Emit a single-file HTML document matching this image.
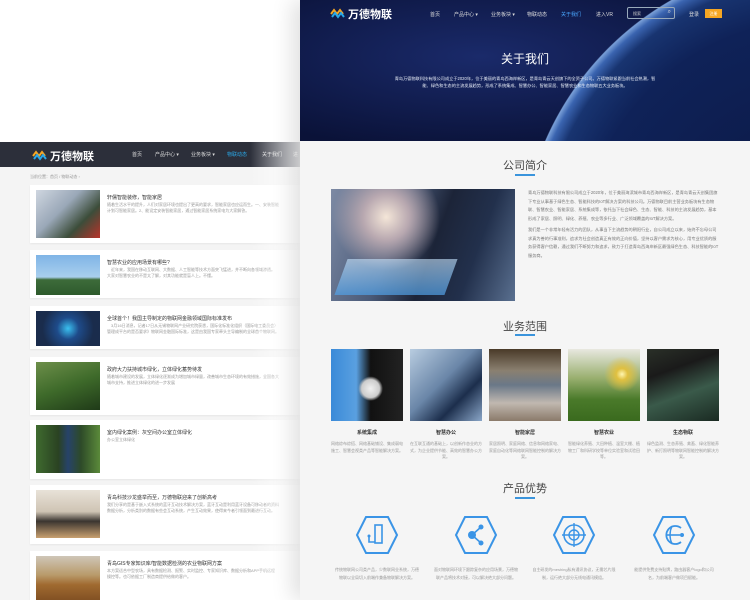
<!DOCTYPE html>
<html><head><meta charset="utf-8"><style>
*{margin:0;padding:0;box-sizing:border-box}
body{width:750px;height:600px;overflow:hidden;background:#fff;font-family:"Liberation Sans","Noto Sans CJK SC",sans-serif;position:relative}
.abs{position:absolute}
#left{left:0;top:142px;width:300px;height:458px;background:#f4f4f4;overflow:hidden}
#lnav{left:0;top:0;width:300px;height:25px;background:#2c2f3a}
.logo{display:flex;align-items:center;gap:2px}
.logo b{font-size:11px;color:#fff;font-weight:bold;letter-spacing:0}
.navi{font-size:5px;color:#ddd;top:9px}
.card{left:30px;width:280px;background:#fff;box-shadow:0 1px 2px rgba(0,0,0,.06)}
.card .img{position:absolute;left:6px;top:5px;width:64px;height:48px}
.card .t{position:absolute;left:77px;top:9px;font-size:5px;color:#333;white-space:nowrap}
.card .d{position:absolute;left:77px;top:17px;font-size:4px;color:#999;line-height:6px;width:200px;white-space:nowrap;overflow:hidden}
#fade{left:250px;top:142px;width:50px;height:458px;background:linear-gradient(90deg,rgba(255,255,255,0),rgba(255,255,255,.85))}
#right{left:300px;top:0;width:450px;height:600px;background:#f5f5f5;box-shadow:-8px 0 20px rgba(0,0,0,.12)}
#hero{left:0;top:0;width:450px;height:141px;overflow:hidden;background:radial-gradient(ellipse at 40% 40%,#1a2a6a,#0a1238 80%)}
#planet{left:220px;top:-40px;width:600px;height:600px;border-radius:50%;background:radial-gradient(circle 300px at 300px 300px,#0a1640 0,#0f2258 240px,#183470 280px,#3a64b0 293px,#7aa0d8 299px,rgba(90,134,200,0) 300px)}
.h2{position:absolute;left:0;width:450px;text-align:center;font-size:11px;color:#444}
.ul{position:absolute;left:215px;width:20px;height:2px;background:#3a94dc}
.p{font-size:4.2px;color:#777;line-height:8.5px}
.tile{position:absolute;top:349px;width:72px;height:72px}
.tt{position:absolute;top:429px;width:72px;text-align:center;font-size:5px;color:#333;font-weight:bold}
.td{position:absolute;top:441px;width:72px;text-align:center;font-size:4px;color:#999;line-height:6.5px}
.hx{position:absolute;top:515px;width:44px;height:40px}
.hd{position:absolute;top:566px;width:86px;text-align:center;font-size:4px;color:#999;line-height:7.5px}
</style></head><body>

<div id="left" class="abs">
 <div id="lnav" class="abs">
  <div class="abs logo" style="left:32px;top:6px">
   <svg width="16" height="12" viewBox="0 0 16 12"><path d="M1 6 L4 2 L7 6 L10 2 L13 6" stroke="#f5a623" stroke-width="2" fill="none"/><path d="M2 9 L5 5 L8 9 L11 5 L14 9" stroke="#2aa8e8" stroke-width="2" fill="none"/></svg>
   <b>万德物联</b>
  </div>
  <span class="abs navi" style="left:132px">首页</span>
  <span class="abs navi" style="left:155px">产品中心 ▾</span>
  <span class="abs navi" style="left:191px">业务板块 ▾</span>
  <span class="abs navi" style="left:227px;color:#2aa8e8">物联动态</span>
  <span class="abs navi" style="left:262px">关于我们</span>
  <span class="abs navi" style="left:293px">进</span>
 </div>
 <div class="abs" style="left:30px;top:32px;font-size:4px;color:#999">当前位置：首页 / 物联动态 ›</div>
 <div class="abs card" style="top:43px;height:58px"><div class="img" style="background:linear-gradient(135deg,#cfd6e0,#9aa8b8 40%,#3c4d3a 70%,#b8332a)"></div><div class="t">轩儒智能装修，智能家居</div><div class="d">随着生活水平的提升，人们对家居环境也提出了更高的要求，智能家居也应运而生。一、安装智能<br>计划可智能家居。2、能设定安装智能家居，通过智能家居系统家电为大家解答。</div></div>
 <div class="abs card" style="top:108px;height:48px"><div class="img" style="height:40px;background:linear-gradient(180deg,#7fb4e6,#a9cfee 55%,#3d6b3a 62%,#2e5a2c)"></div><div class="t">智慧农业的应用场景有哪些?</div><div class="d">　近年来，我国在移动互联网、大数据、人工智能等技术方面突飞猛进，并不断向各领域渗透。<br>大家对智慧农业的不是太了解，对其功能就是盲人上。不懂。</div></div>
 <div class="abs card" style="top:164px;height:43px"><div class="img" style="height:35px;background:radial-gradient(circle at 50% 50%,#3ac0f0 0,#1e4b8a 30%,#1a2c4c 70%)"></div><div class="t">全球首个！我国主导制定的物联网金融领域国际标准发布</div><div class="d">　3月16日消息，记者17日从无锡物联网产业研究院获悉，国际化标准化组织（国际电工委员会）<br>管理成平台的是否要求》物联网金融国际标准，这是由我国专家牵头主导编制的全球首个物联网。</div></div>
 <div class="abs card" style="top:215px;height:58px"><div class="img" style="background:linear-gradient(160deg,#6d8f4a,#3e6a2a 50%,#1f3a18)"></div><div class="t">政府大力扶持城市绿化，立体绿化蓄势待发</div><div class="d">随着城市建设的发展，立体绿化逐渐成为增加城市绿量，改善城市生态环境的有效措施，全国各大<br>城市支持，推进立体绿化的进一步发展</div></div>
 <div class="abs card" style="top:278px;height:59px"><div class="img" style="background:linear-gradient(90deg,#3f6b2f,#2a4222 35%,#27436a 50%,#2d4a28 70%,#5b8a3a)"></div><div class="t">室内绿化案例：灰空间办公室立体绿化</div><div class="d">办公室立体绿化</div></div>
 <div class="abs card" style="top:343px;height:59px"><div class="img" style="background:linear-gradient(180deg,#e8e2d8,#cfc4b4 45%,#3a3530 65%,#c8a070)"></div><div class="t">青岛科技沙龙盛举而至，万德物联迎来了创新高考</div><div class="d">我们分享的是基于嵌入式系统的蓝牙互动技术解决方案，蓝牙互动是利用蓝牙设备可移动者的资料<br>数据分析，分析类别的数据有些会互动系统，产生互动效果，使得来今者引领面到最进行互动。</div></div>
 <div class="abs card" style="top:409px;height:55px"><div class="img" style="background:linear-gradient(180deg,#cfc6b8,#b89a6a 40%,#a06a30 60%,#7a4a20)"></div><div class="t">青岛GIS专家知识库/智能数据检测的农业物联网方案</div><div class="d">本方案适合中型农场，具有数据检测、报警、实时监控、专家知识库、数据分析和APP手机远程<br>操控等。也可依据工厂制造商提供给做的客户。</div></div>
</div>
<div id="fade" class="abs"></div>

<div id="right" class="abs">
 <div id="hero" class="abs">
  <div id="planet" class="abs"></div>
  <div class="abs logo" style="left:30px;top:6px">
   <svg width="16" height="12" viewBox="0 0 16 12"><path d="M1 6 L4 2 L7 6 L10 2 L13 6" stroke="#f5a623" stroke-width="2" fill="none"/><path d="M2 9 L5 5 L8 9 L11 5 L14 9" stroke="#2aa8e8" stroke-width="2" fill="none"/></svg>
   <b>万德物联</b>
  </div>
  <span class="abs navi" style="left:130px;top:11px">首页</span>
  <span class="abs navi" style="left:154px;top:11px">产品中心 ▾</span>
  <span class="abs navi" style="left:191px;top:11px">业务板块 ▾</span>
  <span class="abs navi" style="left:227px;top:11px">物联动态</span>
  <span class="abs navi" style="left:261px;top:11px;color:#4aa8ff">关于我们</span>
  <span class="abs navi" style="left:296px;top:11px">进入VR</span>
  <div class="abs" style="left:327px;top:7px;width:48px;height:12px;border:1px solid #9ab;border-radius:2px"><span class="abs" style="left:5px;top:3px;font-size:4px;color:#ccc">搜索</span><span class="abs" style="right:3px;top:1px;font-size:6px;color:#ddd">⌕</span></div>
  <span class="abs navi" style="left:389px;top:11px">登录</span>
  <div class="abs" style="left:405px;top:9px;width:17px;height:9px;background:#f5a623;font-size:4px;color:#fff;text-align:center;line-height:9px">注册</div>
  <div class="abs" style="left:0;top:50px;width:450px;text-align:center;font-size:12px;color:#fff">关于我们</div>
  <div class="abs" style="left:92px;top:75px;width:266px;text-align:center;font-size:4.2px;color:#e8eef8;line-height:7px">青岛万德物联科技有限公司成立于2020年，位于美丽的青岛西海岸新区，是青岛青云天创旗下的全资子公司。万德物联紧跟当前社会热潮，智能、绿色和生态的主流发展趋势，形成了系统集成、智慧办公、智能家居、智慧农业和生态物联五大业务板块。</div>
 </div>

 <div class="h2" style="top:157px">公司简介</div><div class="ul" style="top:174px"></div>
 <div class="abs" style="left:31px;top:189px;width:184px;height:112px;background:radial-gradient(circle at 30% 25%,#f4e6d8 0,#b8a8b0 15%,transparent 35%),linear-gradient(110deg,#7d8aa4 0%,#4a5a78 35%,#1c2438 55%,#22304c 75%,#5a7090 100%)"><div class="abs" style="left:10px;top:70px;width:110px;height:36px;background:linear-gradient(180deg,rgba(200,230,255,.6),rgba(80,160,230,.7));transform:skewX(-20deg)"></div></div>
 <div class="abs p" style="left:228px;top:189px;width:192px">青岛万德物联科技有限公司成立于2020年，位于美丽海滨城市青岛西海岸新区，是青岛青云天创集团旗下专业从事基于绿色生态、智能科技的IoT解决方案的科技公司。万德物联目前主营业务板块有生态物联、智慧农业、智能家居、系统集成等，依托当下社会绿色、生态、智能、科技的主流发展趋势，基本形成了家居、照明、绿化、养殖、农业等多行业、广泛领域覆盖的IoT解决方案。<div style="height:3px"></div>我们是一个非常年轻有活力的团队，从事当下主流趋势的朝阳行业，自公司成立以来，始终不忘母公司求真为善的行事准则，追求为社会创造真正有效的正向价值，坚持以客户需求为核心，用专业优质的服务获得客户信赖，通过我们不断努力和追求，致力于打造青岛西海岸新区最强绿色生态、科技智能的IoT服务商。</div>

 <div class="h2" style="top:318px">业务范围</div><div class="ul" style="top:334px"></div>
 <div class="tile" style="left:31px;background:radial-gradient(circle at 55% 55%,#f0f0f0 0,#ccc 16%,transparent 22%),linear-gradient(90deg,#3a8ad8 0,#5aa0e0 35%,#111 55%,#222 100%)"></div>
 <div class="tile" style="left:110px;background:linear-gradient(135deg,#b8cce0,#6a86a8 45%,#1c2e4c 70%,#8aa6c8)"></div>
 <div class="tile" style="left:189px;background:linear-gradient(180deg,#4a3a28,#8a8070 30%,#6a7888 50%,#c0b8b0 75%,#8a7a6a)"></div>
 <div class="tile" style="left:268px;background:radial-gradient(circle at 75% 35%,#fff6b0 0,#e0c040 8%,transparent 25%),linear-gradient(180deg,#e8e8e0,#9ab070 40%,#4a7a2a 70%,#3a6a1e)"></div>
 <div class="tile" style="left:347px;background:linear-gradient(160deg,#2a3028,#1a1a1a 30%,#3a5a4a 60%,#1a2a22)"></div>
 <div class="tt" style="left:31px">系统集成</div><div class="td" style="left:31px">网络综布综搭、网络基础铺设、集成弱电施工、智慧会视类产品等智能解决方案。</div>
 <div class="tt" style="left:110px">智慧办公</div><div class="td" style="left:110px">在互联互通的基础上，以创新作态业的方式，为企业提供节能、高效的智慧办公方案。</div>
 <div class="tt" style="left:189px">智能家居</div><div class="td" style="left:189px">家居照明、家庭网络、信息和网络家电、家庭自动化等网络联网智能控制的解决方案。</div>
 <div class="tt" style="left:268px">智慧农业</div><div class="td" style="left:268px">智能绿化养殖、大田种植、温室大棚、植物工厂和科研学校等单位实验室和试验田等。</div>
 <div class="tt" style="left:347px">生态物联</div><div class="td" style="left:347px">绿色监测、生态养殖、禽畜、绿化智能养护、新打照明等物联网智能控制的解决方案。</div>

 <div class="h2" style="top:480px">产品优势</div><div class="ul" style="top:497px"></div>
 <svg class="hx" style="left:55px" viewBox="0 0 44 40"><polygon points="11,2 33,2 42,20 33,38 11,38 2,20" fill="none" stroke="#3a94e6" stroke-width="2"/><rect x="20" y="10" width="7" height="18" fill="none" stroke="#3a94e6" stroke-width="1.6"/><path d="M14 22 v5 h6" fill="none" stroke="#3a94e6" stroke-width="1.6"/><circle cx="14" cy="21" r="1.5" fill="#3a94e6"/></svg>
 <svg class="hx" style="left:154px" viewBox="0 0 44 40"><polygon points="11,2 33,2 42,20 33,38 11,38 2,20" fill="none" stroke="#3a94e6" stroke-width="2"/><circle cx="18" cy="20" r="4" fill="#3a94e6"/><circle cx="27" cy="12" r="2.5" fill="#3a94e6"/><circle cx="27" cy="28" r="2.5" fill="#3a94e6"/><path d="M18 20 L27 12 M18 20 L27 28" stroke="#3a94e6" stroke-width="1.6"/></svg>
 <svg class="hx" style="left:252px" viewBox="0 0 44 40"><polygon points="11,2 33,2 42,20 33,38 11,38 2,20" fill="none" stroke="#3a94e6" stroke-width="2"/><circle cx="22" cy="20" r="10" fill="none" stroke="#3a94e6" stroke-width="1.6"/><circle cx="22" cy="20" r="5" fill="none" stroke="#3a94e6" stroke-width="1.4"/><path d="M10 20 h24 M22 8 v24" stroke="#3a94e6" stroke-width="1.4"/></svg>
 <svg class="hx" style="left:352px" viewBox="0 0 44 40"><polygon points="11,2 33,2 42,20 33,38 11,38 2,20" fill="none" stroke="#3a94e6" stroke-width="2"/><path d="M29 13 A9 9 0 1 0 29 27" fill="none" stroke="#3a94e6" stroke-width="1.8"/><path d="M14 20 h14" stroke="#3a94e6" stroke-width="1.6"/><path d="M20 11 q-4 9 0 18" fill="none" stroke="#3a94e6" stroke-width="1.4"/><circle cx="30" cy="20" r="2" fill="#3a94e6"/></svg>
 <div class="hd" style="left:34px">传统物联网公司类产品，少数联网业系统，万德物联以全局切入前端作兼备物联解决方案。</div>
 <div class="hd" style="left:133px">面对物联网环境下跟踪复杂的应用场景，万德物联产品将技术对接，可以解决绝大部分问题。</div>
 <div class="hd" style="left:231px">自主研发的meshing私有通讯协议，无需芯片限制，运行绝大部分无线电通讯模组。</div>
 <div class="hd" style="left:331px">能提供免费支持贴牌，路由器客户logo和公司名，为前端客户做项目赋能。</div>
</div>
</body></html>
